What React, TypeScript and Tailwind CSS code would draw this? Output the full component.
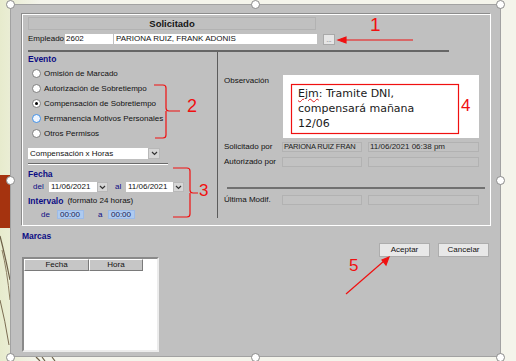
import React from 'react'

const NAVY = 'text-[#0c0c84]'

const handles = [
  [10, 4], [255, 4], [500, 4],
  [10, 180], [500, 180],
  [10, 357], [255, 357], [500, 357],
]

const Chevron = () => (
  <svg width="7" height="5" viewBox="0 0 7 5" fill="none" stroke="#333" strokeWidth="1.2">
    <path d="M1 1l2.5 2.5L6 1" />
  </svg>
)

function Radio({ label, checked = false, focus = false }: { label: string; checked?: boolean; focus?: boolean }) {
  return (
    <div className="flex items-center h-[15px] gap-[3px] pl-[4px]">
      <span
        className={
          focus
            ? 'w-[9px] h-[9px] rounded-full border border-[#3f8fe6] bg-[#eef5ff] flex items-center justify-center'
            : 'w-[9px] h-[9px] rounded-full border border-[#7c7c7c] bg-white flex items-center justify-center'
        }
      >
        {checked && <span className="w-[3px] h-[3px] rounded-full bg-black" />}
      </span>
      <span>{label}</span>
    </div>
  )
}

function Field({ w, children }: { w: string; children?: React.ReactNode }) {
  return (
    <div className={`${w} h-[10px] border border-[#b2b2b2] bg-[#c2c2c2] flex items-center px-[1px] text-[#1c1c1c] whitespace-nowrap overflow-hidden`}>
      {children}
    </div>
  )
}

function DateBox({ w }: { w: string }) {
  return (
    <div className="flex items-center h-[10px]">
      <div className={`${w} h-[10px] bg-white flex items-center px-[2px]`}>11/06/2021</div>
      <div className="w-[11px] h-[10px] bg-[#d6d6d6] border border-[#b8b8b8] flex items-center justify-center">
        <Chevron />
      </div>
    </div>
  )
}

export default function App() {
  return (
    <div className="relative w-[516px] h-[361px] overflow-hidden bg-[#f4f4eb] font-['Liberation_Sans',Arial,sans-serif] text-[8px] leading-none text-[#111]">
      {/* slide background */}
      <svg className="absolute inset-0" width="516" height="361">
        <defs>
          <linearGradient id="g" x1="0" y1="0" x2="1" y2="0">
            <stop offset="0" stopColor="#e7ebcd" />
            <stop offset="1" stopColor="#f4f4eb" />
          </linearGradient>
        </defs>
        <rect x="0" y="0" width="40" height="361" fill="url(#g)" />
        <rect x="0" y="175" width="10" height="53" fill="#a5330f" />
        <path d="M0 236 Q5 255 10 280" stroke="#6d6048" strokeWidth="1.2" fill="none" />
        <path d="M2 250 Q7 270 10 300" stroke="#8c7f63" strokeWidth="1" fill="none" />
        <path d="M0 300 Q5 320 9 345" stroke="#7b6c52" strokeWidth="1" fill="none" />
        <path d="M36 357 L40 361 M42 357 L45 361 M52 357 L55 361" stroke="#6d6048" strokeWidth="1.2" />
      </svg>

      {/* selected picture */}
      <div className="relative ml-[10px] mt-[4px] w-[491px] h-[353px] border border-[#a2a2a2] bg-[#c0c0c0]">
        {/* Solicitado group */}
        <div className="ml-[10px] mt-[8px] w-[470px] h-[213px] border border-[#8c8c8c] border-r-white border-b-white shadow-[inset_1px_1px_0_#fff] flex flex-col">
          <div className="ml-[6px] mt-[3px] w-[288px] h-[13px] border border-[#b2b2b2] flex items-center justify-center text-[9.5px] font-bold text-[#151515]">
            Solicitado
          </div>

          <div className="mt-[3px] ml-[6px] flex items-center h-[12px]">
            <span className="w-[37px]">Empleado</span>
            <div className="w-[48px] h-[10px] bg-white flex items-center px-[1px]">2602</div>
            <div className="ml-[1px] w-[203px] h-[10px] bg-white flex items-center px-[2px]">PARIONA RUIZ, FRANK ADONIS</div>
            <div className="ml-[6px] w-[12px] h-[11px] bg-[#e6e6e6] border border-[#a9a9a9] flex items-end justify-center text-[6px] pb-[1px] text-[#333]">
              ...
            </div>
          </div>

          <div className="mt-[5px] ml-[6px] w-[421px] h-[2px] bg-[#666]" />

          <div className="flex ml-[6px]">
            {/* left: evento / fecha */}
            <div className="w-[189px] flex flex-col">
              <div className={`mt-[2px] leading-[10px] text-[8.5px] font-bold ${NAVY}`}>Evento</div>
              <div className="mt-[2px] flex flex-col">
                <Radio label="Omisión de Marcado" />
                <Radio label="Autorización de Sobretiempo" />
                <Radio label="Compensación de Sobretiempo" checked />
                <Radio label="Permanencia Motivos Personales" focus />
                <Radio label="Otros Permisos" />
              </div>
              <div className="mt-[7px] flex h-[11px]">
                <div className="w-[120px] bg-white flex items-center px-[2px]">Compensación x Horas</div>
                <div className="w-[12px] bg-[#d6d6d6] border border-[#b8b8b8] flex items-center justify-center">
                  <Chevron />
                </div>
              </div>
              <div className="mt-[4px] w-[140px] border-t border-[#6a6a6a] border-b border-b-white" />
              <div className={`mt-[5px] leading-[8px] text-[8.5px] font-bold ${NAVY}`}>Fecha</div>
              <div className="mt-[4px] flex items-center h-[10px]">
                <span className={`ml-[5px] w-[16px] ${NAVY}`}>del</span>
                <DateBox w="w-[48px]" />
                <span className={`ml-[7px] w-[11px] ${NAVY}`}>al</span>
                <DateBox w="w-[47px]" />
              </div>
              <div className="mt-[4px] flex items-center h-[10px]">
                <span className={`text-[8.5px] font-bold ${NAVY}`}>Intervalo</span>
                <span className="ml-[4px]">(formato 24 horas)</span>
              </div>
              <div className="mt-[4px] flex items-center h-[9px]">
                <span className={`ml-[13px] w-[16px] ${NAVY}`}>de</span>
                <div className="w-[27px] h-[9px] bg-[#aecaf0] border border-[#9dbbe6] flex items-center px-[2px] text-[#1a1a50]">00:00</div>
                <span className={`ml-[14px] w-[10px] ${NAVY}`}>a</span>
                <div className="w-[27px] h-[9px] bg-[#aecaf0] border border-[#9dbbe6] flex items-center px-[2px] text-[#1a1a50]">00:00</div>
              </div>
            </div>

            {/* right: observación */}
            <div className="w-[272px] h-[166px] border-l border-[#5c5c5c] flex flex-col">
              <div className="mt-[23px] flex items-start">
                <span className="ml-[6px] w-[59px] pt-[2px]">Observación</span>
                <div className="w-[196px] h-[63px] bg-white pl-[15px] pt-[11px] font-['DejaVu_Sans',sans-serif] text-[11px] leading-[15px] text-[#1a1a1a]">
                  <span className="underline decoration-wavy decoration-[#e02020] decoration-[1px]">Ejm</span>: Tramite DNI,
                  <br />
                  compensará mañana
                  <br />
                  12/06
                </div>
              </div>
              <div className="mt-[4px] flex items-center h-[10px]">
                <span className="ml-[6px] w-[58px]">Solicitado por</span>
                <Field w="w-[80px] text-[7.5px] tracking-[-0.2px]">PARIONA RUIZ FRAN</Field>
                <div className="ml-[6px]">
                  <Field w="w-[111px]">11/06/2021 06:38 pm</Field>
                </div>
              </div>
              <div className="mt-[5px] flex items-center h-[10px]">
                <span className="ml-[6px] w-[58px]">Autorizado por</span>
                <Field w="w-[80px]" />
                <div className="ml-[6px]">
                  <Field w="w-[111px]" />
                </div>
              </div>
              <div className="mt-[20px] ml-[9px] w-[258px] h-[2px] bg-[#707070]" />
              <div className="mt-[6px] flex items-center h-[10px]">
                <span className="ml-[6px] w-[58px]">Última Modif.</span>
                <Field w="w-[80px]" />
                <div className="ml-[6px]">
                  <Field w="w-[111px]" />
                </div>
              </div>
            </div>
          </div>
        </div>

        {/* marcas + buttons */}
        <div className="flex">
          <div className="ml-[11px] flex flex-col">
            <div className={`mt-[6px] leading-[9px] text-[8.5px] font-bold ${NAVY}`}>Marcas</div>
            <div className="mt-[16px] w-[137px] h-[95px] border-2 border-[#8a8a8a] border-r-[#ececec] border-b-[#ececec] bg-white">
              <div className="flex h-[12px]">
                <div className="w-[65px] bg-[#c6c6c6] border border-white border-r-[#7a7a7a] border-b-[#7a7a7a] flex items-center justify-center">Fecha</div>
                <div className="w-[54px] bg-[#c6c6c6] border border-white border-r-[#7a7a7a] border-b-[#7a7a7a] flex items-center justify-center">Hora</div>
              </div>
            </div>
          </div>
          <div className="ml-auto mr-[11px] mt-[17px] flex gap-[8px]">
            <button className="w-[51px] h-[14px] bg-[#e8e8e8] border border-[#adadad] text-[8px] text-[#111]">Aceptar</button>
            <button className="w-[51px] h-[14px] bg-[#e8e8e8] border border-[#adadad] text-[8px] text-[#111]">Cancelar</button>
          </div>
        </div>
      </div>

      {/* selection handles */}
      {handles.map(([x, y]) => (
        <span
          key={`${x}-${y}`}
          className="absolute w-[9px] h-[9px] rounded-full bg-white border border-[#8a8a8a]"
          style={{ left: x - 4.5, top: y - 4.5 }}
        />
      ))}

      {/* red annotations */}
      <svg className="absolute inset-0 pointer-events-none" width="516" height="361" fill="none" stroke="#f01010" strokeWidth="1.2">
        <path d="M413 40H344" />
        <path d="M338 40l8-3v6z" fill="#f01010" />
        <path d="M154 85H163Q166 85 166 88V108Q166 111 169 111H180M166 111Q166 114 166 117V135Q166 138 163 138H155" />
        <path d="M173 168H187Q190 168 190 171V190Q190 193 193 193H198M190 193V214Q190 217 187 217H173" />
        <rect x="291.5" y="84.5" width="167" height="49" />
        <path d="M346 294L384 261" />
        <path d="M389 257l-3 8-4-5z" fill="#f01010" />
      </svg>
      <span className="absolute left-[370px] top-[15px] text-[19px] text-[#f01010] leading-none">1</span>
      <span className="absolute left-[187px] top-[97px] text-[18px] text-[#f01010] leading-none">2</span>
      <span className="absolute left-[199px] top-[182px] text-[17px] text-[#f01010] leading-none">3</span>
      <span className="absolute left-[461px] top-[97px] text-[17px] text-[#f01010] leading-none">4</span>
      <span className="absolute left-[349px] top-[257px] text-[17px] text-[#f01010] leading-none">5</span>
    </div>
  )
}
